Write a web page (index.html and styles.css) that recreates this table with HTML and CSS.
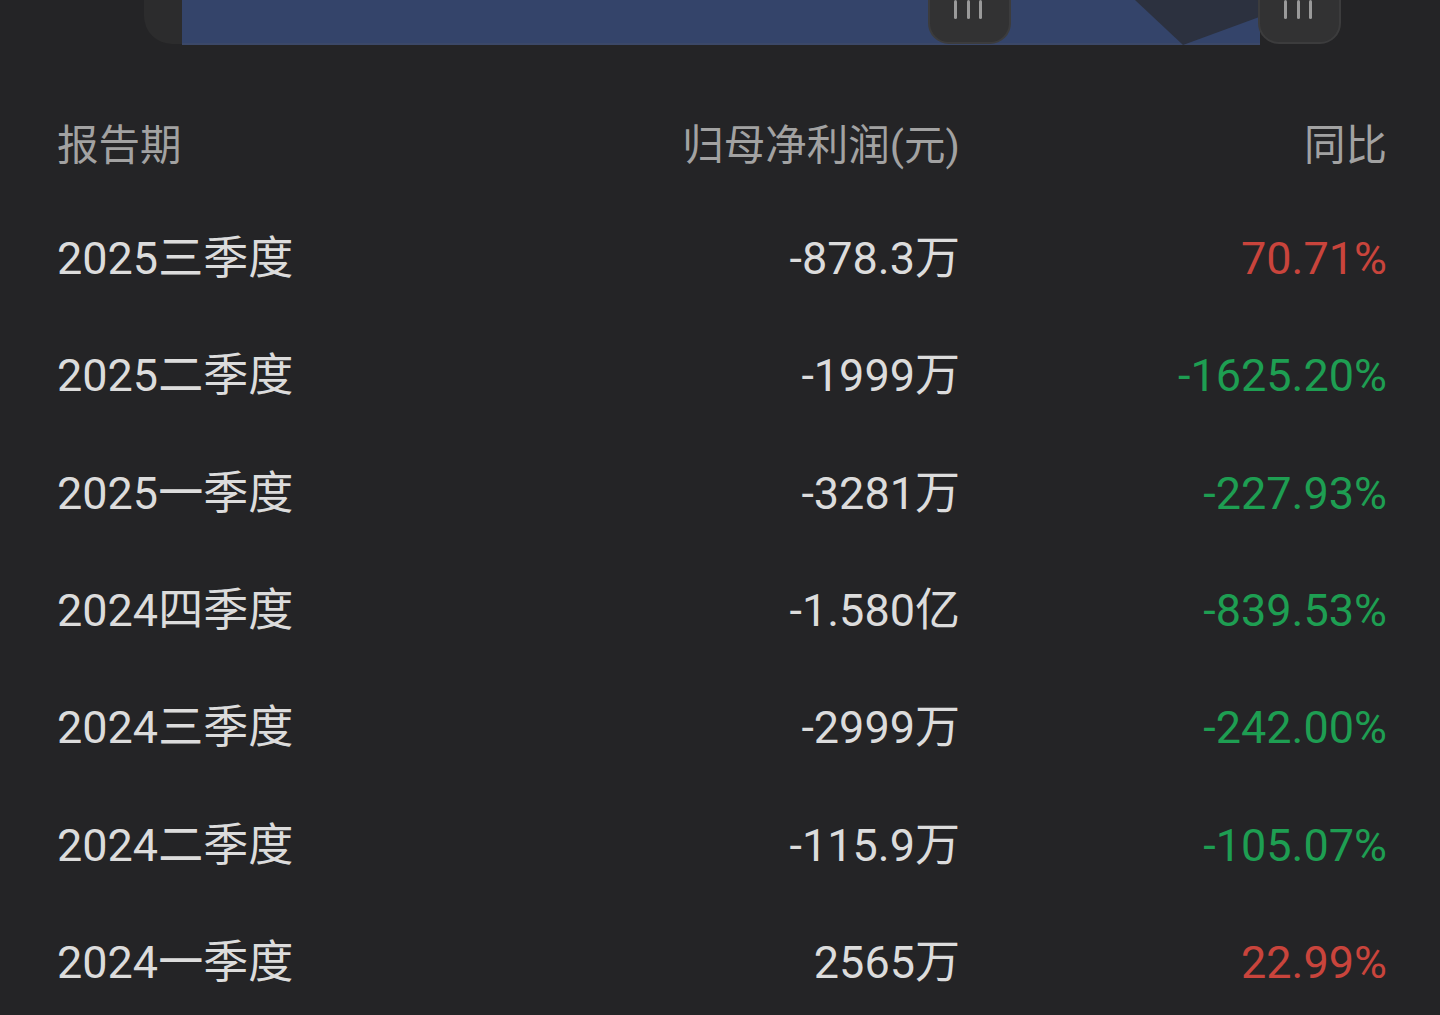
FILE: index.html
```html
<!DOCTYPE html>
<html lang="zh-CN">

<head>
    <meta charset="UTF-8">
    <meta name="viewport" content="width=device-width, initial-scale=1.0">
    <title>归母净利润</title>
    <link rel="stylesheet" href="styles.css">
</head>

<body>
    <!-- range slider under the chart -->
    <div class="slider">
        <svg width="1440" height="45" viewBox="0 0 1440 45">
            <path d="M144 0 H182 V44 H172 A28 28 0 0 1 144 16 Z" fill="#2c2c2d" />
            <rect x="182" y="0" width="1078" height="45" fill="#34446a" />
            <rect x="182" y="43" width="1078" height="2" fill="#3b4868" />
            <polygon points="1135,0 1183,45 1262,16 1262,0" fill="#2c313f" />
            <g class="handle">
                <path d="M929 0 V23 A20 20 0 0 0 949 43 H990 A20 20 0 0 0 1010 23 V0" fill="#323233" stroke="#3c3c3d" stroke-width="2" />
                <rect x="954" y="0" width="3" height="19" rx="1.5" fill="#9a9a9a" />
                <rect x="967" y="0" width="3" height="19" rx="1.5" fill="#9a9a9a" />
                <rect x="979" y="0" width="3" height="19" rx="1.5" fill="#9a9a9a" />
            </g>
            <g class="handle">
                <path d="M1259 0 V23 A20 20 0 0 0 1279 43 H1320 A20 20 0 0 0 1340 23 V0" fill="#323233" stroke="#3c3c3d" stroke-width="2" />
                <rect x="1284" y="0" width="3" height="19" rx="1.5" fill="#9a9a9a" />
                <rect x="1297" y="0" width="3" height="19" rx="1.5" fill="#9a9a9a" />
                <rect x="1309" y="0" width="3" height="19" rx="1.5" fill="#9a9a9a" />
            </g>
        </svg>
    </div>

    <div class="table">
        <div class="row head">
            <div class="cell">报告期</div>
            <div class="cell num">归母净利润(元)</div>
            <div class="cell num">同比</div>
        </div>
        <div class="row">
            <div class="cell">2025三季度</div>
            <div class="cell num">-878.3万</div>
            <div class="cell num up">70.71%</div>
        </div>
        <div class="row">
            <div class="cell">2025二季度</div>
            <div class="cell num">-1999万</div>
            <div class="cell num down">-1625.20%</div>
        </div>
        <div class="row">
            <div class="cell">2025一季度</div>
            <div class="cell num">-3281万</div>
            <div class="cell num down">-227.93%</div>
        </div>
        <div class="row">
            <div class="cell">2024四季度</div>
            <div class="cell num">-1.580亿</div>
            <div class="cell num down">-839.53%</div>
        </div>
        <div class="row">
            <div class="cell">2024三季度</div>
            <div class="cell num">-2999万</div>
            <div class="cell num down">-242.00%</div>
        </div>
        <div class="row">
            <div class="cell">2024二季度</div>
            <div class="cell num">-115.9万</div>
            <div class="cell num down">-105.07%</div>
        </div>
        <div class="row">
            <div class="cell">2024一季度</div>
            <div class="cell num">2565万</div>
            <div class="cell num up">22.99%</div>
        </div>
    </div>
</body>

</html>
```

FILE: styles.css
```css
/* General Styles */
body {
    margin: 0;
    padding: 0;
    background-color: #242426;
    font-family: Roboto, "Noto Sans CJK SC", sans-serif;
    color: #dcdcdc;
    overflow: hidden;
}

.slider {
    height: 45px;
}

.slider svg {
    display: block;
}

.table {
    margin-top: 46px;
    padding: 0 53px 0 57px;
}

.row {
    display: grid;
    grid-template-columns: 501px 402px 427px;
    align-items: center;
    height: 117.33px;
    font-size: 45px;
    line-height: 1;
}

.row.head {
    height: 109px;
    font-size: 41.5px;
    color: #a2a2a2;
}

.cell {
    white-space: nowrap;
}

.num {
    text-align: right;
}

.up {
    color: #c9443c;
}

.down {
    color: #1e9e52;
}
```
